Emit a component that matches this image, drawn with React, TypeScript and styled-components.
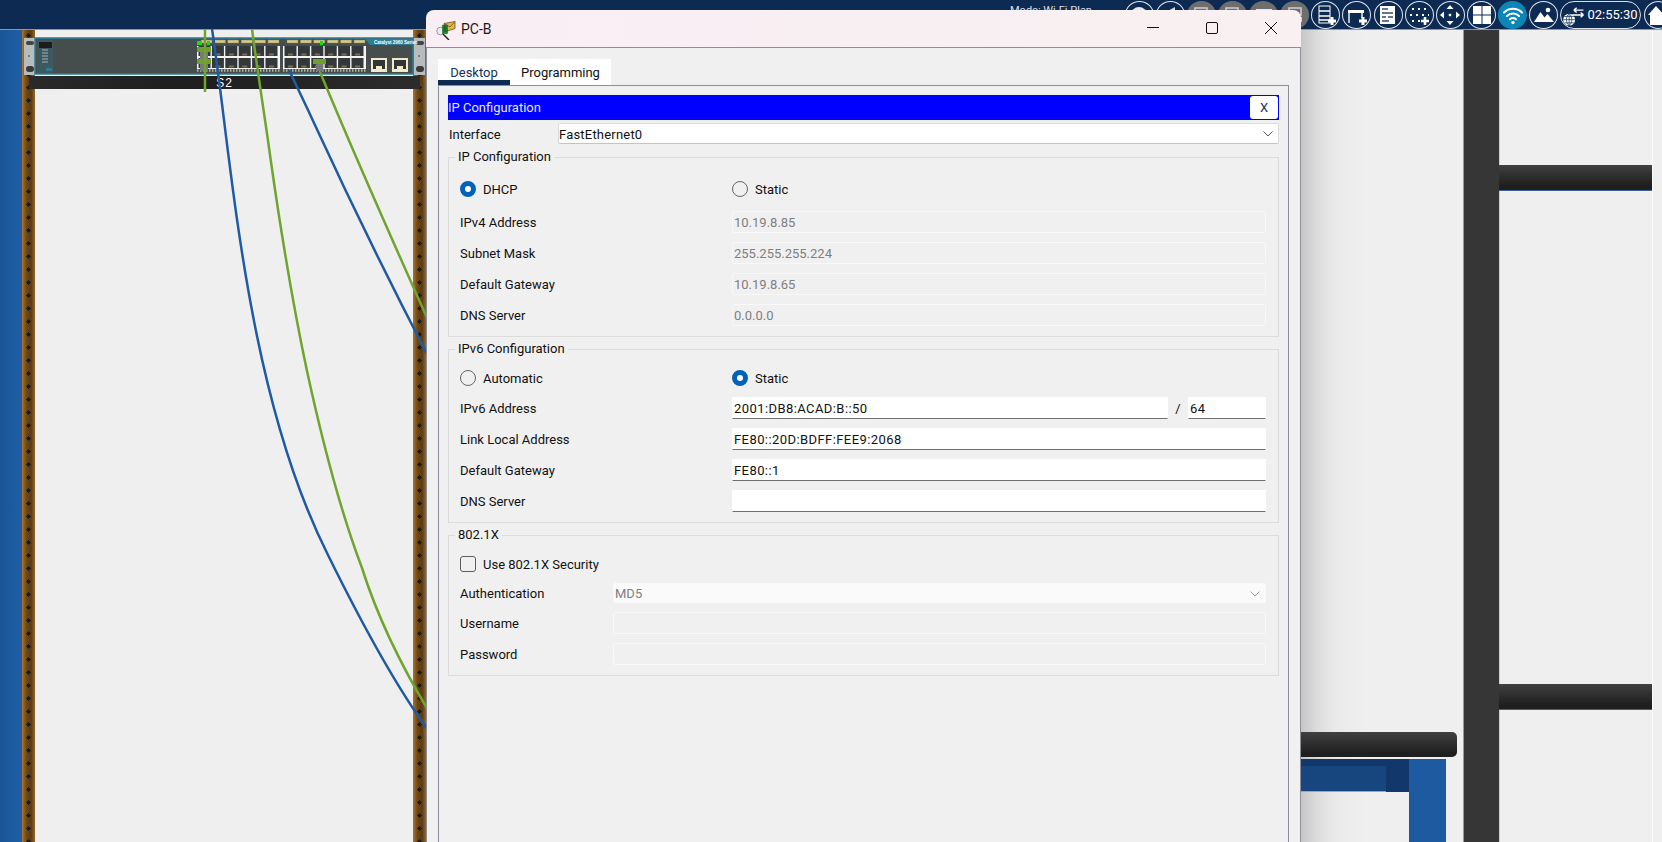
import React from 'react';
import styled, { createGlobalStyle } from 'styled-components';

const GlobalStyle = createGlobalStyle`
  html, body { margin: 0; padding: 0; background: #efefef; }
  #root { width: 1662px; height: 842px; }
  * { box-sizing: border-box; }
`;

const UI_FONT = `Roboto, "Open Sans", Arial, sans-serif`;

const Root = styled.div`
  position: relative;
  width: 1662px;
  height: 842px;
  overflow: hidden;
  display: flex;
  flex-direction: column;
  font-family: ${UI_FONT};
  font-size: 13px;
  color: #111;
`;

/* ---------- top toolbar ---------- */
const TopBar = styled.header`
  flex: 0 0 30px;
  display: flex;
  align-items: center;
  padding-left: 1010px;
  background: #0d2a52;
  border-bottom: 1px solid #8d96a6;
`;
const ModeText = styled.span`
  flex: 0 0 114.5px;
  font-size: 11px;
  line-height: 1;
  margin-top: -8px;
  color: #d9e0ea;
  white-space: nowrap;
`;
const ToolRow = styled.div`
  display: flex;
  align-items: center;
  gap: 2.15px;
  flex-shrink: 0;
`;
const ToolButton = styled.div<{ $variant?: 'outline' | 'muted' | 'active' }>`
  width: 29px;
  height: 28px;
  flex-shrink: 0;
  border-radius: 50%;
  display: flex;
  align-items: center;
  justify-content: center;
  border: 1px solid ${p => (p.$variant === 'muted' ? '#6e6e6e' : p.$variant === 'active' ? '#0b86b6' : '#dfe4ec')};
  background: ${p => (p.$variant === 'muted' ? '#6e6e6e' : p.$variant === 'active' ? '#0b86b6' : 'transparent')};
`;
const ClockPill = styled.div`
  width: 81px;
  height: 28px;
  flex-shrink: 0;
  border-radius: 14px;
  border: 1px solid #dfe4ec;
  display: flex;
  align-items: center;
  padding-left: 1px;
  gap: 2px;
  color: #fff;
  font-size: 13px;
`;

const W = '#fff';
const Ico = ({ children }: { children: React.ReactNode }) => (
  <svg width="22" height="22" viewBox="0 0 22 22" fill="none">{children}</svg>
);
const ListPlus = () => (
  <Ico>
    <rect x="4" y="2" width="11" height="17" fill="none" stroke={W} strokeWidth="1" />
    <path d="M4 7h11M4 12h11M4 16h11" stroke={W} strokeWidth="1.4" />
    <path d="M17 13v8M13 17h8" stroke={W} strokeWidth="3" />
  </Ico>
);
const TablePlus = () => (
  <Ico>
    <path d="M2 6h16v3H2z" fill={W} />
    <path d="M3 9v10M16 9v5" stroke={W} strokeWidth="1.4" />
    <path d="M17 13v8M13 17h8" stroke={W} strokeWidth="3" />
  </Ico>
);
const PanelIcon = () => (
  <Ico>
    <rect x="3" y="2" width="15" height="18" fill={W} />
    <path d="M5 5h6M5 9h11M5 13h4M11 13h5M5 17h7" stroke="#33496b" strokeWidth="1.5" />
  </Ico>
);
const DotsPlus = () => (
  <Ico>
    <path d="M4 5h2M10 5h2M16 5h2M2 11h2M8 11h2M14 11h2M20 11h1M4 17h2M10 17h2" stroke={W} strokeWidth="2" />
    <path d="M17 13v8M13 17h8" stroke={W} strokeWidth="2.6" />
  </Ico>
);
const MoveIcon = () => (
  <Ico>
    <path d="M11 1l3.5 4h-7zM11 21l3.5-4h-7zM1 11l4-3.500v7zM21 11l-4-3.500v7z" fill={W} />
    <rect x="9.800" y="9.800" width="2.400" height="2.400" fill={W} />
  </Ico>
);
const GridIcon = () => (
  <Ico>
    <path d="M2 2h8.500v8.500H2zM11.500 2H20v8.500h-8.500zM2 11.500h8.500V20H2zM11.500 11.500H20V20h-8.500z" fill={W} />
  </Ico>
);
const WifiIcon = () => (
  <Ico>
    <path d="M2 8.500c5-5 13-5 18 0M5 12c3.300-3.300 8.700-3.300 12 0M8 15.300c1.700-1.600 4.300-1.600 6 0" stroke={W} strokeWidth="2" strokeLinecap="round" />
    <circle cx="11" cy="18.500" r="1.700" fill={W} />
  </Ico>
);
const MountainIcon = () => (
  <Ico>
    <path d="M1 18l6.500-10 4 5.500 3-3.500 6.500 8z" fill={W} />
    <circle cx="15" cy="6" r="2.300" fill={W} />
  </Ico>
);
const HomeIcon = () => (
  <Ico>
    <path d="M1 11L9 2l8 9h-2v10H3V11z" fill={W} />
  </Ico>
);
const CircleGlyph = () => (
  <Ico>
    <circle cx="11" cy="11" r="8" fill="#e9e9e9" />
  </Ico>
);
const BackGlyph = () => (
  <Ico>
    <path d="M3 10l13-7v14z" fill="#d9d9d9" />
  </Ico>
);
const MutedPc = () => (
  <Ico>
    <rect x="5" y="4" width="12" height="7" fill="none" stroke="#cfcfcf" strokeWidth="1.500" />
    <rect x="4" y="13" width="14" height="5" fill="#cfcfcf" />
  </Ico>
);
const MutedBar = () => (
  <Ico>
    <rect x="3" y="5" width="16" height="12" fill="#e6e6e6" />
    <rect x="5" y="7" width="9" height="2" fill="#6e6e6e" />
  </Ico>
);
const GlobeArrows = () => (
  <svg width="23" height="21" viewBox="0 0 29 26" fill="none" style={{ flexShrink: 0, marginTop: 3 }}>
    <circle cx="9" cy="17" r="7.500" fill={W} />
    <path d="M1.500 17h15M9 9.500v15M3 13h12M3 21h12M9 9.500c-4.500 3-4.500 12 0 15M9 9.500c4.500 3 4.500 12 0 15" stroke="#0d2a52" strokeWidth="0.900" />
    <path d="M15 5h12M15 5l3.500-3M15 5l3.500 3M13 11h14M27 11l-3.500-3M27 11l-3.500 3" stroke={W} strokeWidth="1.800" />
  </svg>
);

/* ---------- free canvas: what lies behind the window ---------- */
const Canvas = styled.main`
  position: relative;
  flex: 1;
  background: #efefef;
`;
const BlueEdge = styled.div`
  position: absolute;
  left: 0;
  top: 0;
  bottom: 0;
  width: 22px;
  background: linear-gradient(90deg, #1b5595, #1e5ea8);
`;
const Rail = styled.div<{ $x: number }>`
  position: absolute;
  left: ${p => p.$x}px;
  top: 0;
  bottom: 0;
  width: 13px;
  background:
    radial-gradient(circle 2.2px at 50% 50%, #1c1c1c 90%, transparent 100%) 0 -1px / 13px 13px repeat-y,
    linear-gradient(90deg, #a8742a, #6c4718 35%, #5b3b12 70%, #96692a);
`;
const LabelBar = styled.div`
  position: absolute;
  left: 29px;
  top: 46px;
  width: 391px;
  height: 13px;
  display: flex;
  align-items: center;
  justify-content: center;
  background: linear-gradient(100deg, #2a2a2a, #1e1e1e 40%, #2c2c2c);
  color: #fff;
  font-family: "Liberation Sans", Arial, sans-serif;
  font-size: 12px;
  letter-spacing: 1px;
`;
const RackArt = styled.svg`
  position: absolute;
  left: 0;
  top: -30px;
`;
const CableArt = styled.svg`
  position: absolute;
  left: 0;
  top: -30px;
`;
const WindowShadow = styled.div`
  position: absolute;
  left: 1301px;
  top: 0;
  bottom: 0;
  width: 64px;
  background: linear-gradient(90deg, #c6c6c6, #dcdcdc 25%, #eaeaea 55%, #efefef);
`;
const Post = styled.div`
  position: absolute;
  left: 1463px;
  top: 0;
  bottom: 0;
  width: 37px;
  background: #363636;
  border-left: 1px solid #9a9a9a;
  border-right: 1px solid #cfcfcf;
`;
const Beam = styled.div<{ $y: number }>`
  position: absolute;
  left: 1499px;
  top: ${p => p.$y}px;
  width: 153px;
  height: 26px;
  background: linear-gradient(180deg, #404040, #1e1e1e 85%);
  border-bottom: 1px solid #3c5f8f;
`;
const RightEdge = styled.div`
  position: absolute;
  left: 1652px;
  top: 0;
  bottom: 0;
  width: 1px;
  background: #fbfbfb;
`;
const TableTop = styled.div`
  position: absolute;
  left: 1301px;
  top: 702px;
  width: 156px;
  height: 25px;
  border-radius: 0 5px 5px 0;
  background: linear-gradient(180deg, #404040, #1f1f1f 85%);
`;
const TableApron = styled.div`
  position: absolute;
  left: 1301px;
  top: 729px;
  width: 108px;
  height: 33px;
  background: linear-gradient(180deg, #12386b 7px, #17467f 7px);
  border-bottom: 1px solid #9aa6b8;
`;
const TableApronDark = styled.div`
  position: absolute;
  left: 1386px;
  top: 729px;
  width: 23px;
  height: 33px;
  background: #12386b;
`;
const TableLeg = styled.div`
  position: absolute;
  left: 1409px;
  top: 729px;
  bottom: 0;
  width: 37px;
  background: #1d5aa0;
`;

/* ---------- the switch and the cables ---------- */
const Port = ({ x, y }: { x: number; y: number }) => (
  <g>
    <rect x={x + 0.5} y={y} width="12" height="10" fill="#33383a" />
    <rect x={x + 4} y={y + 7.500} width="5" height="2" fill="#7d6f52" />
  </g>
);
const PORT_COLUMNS = [0, 1, 2, 3, 4, 5];
const PortBlock = ({ x }: { x: number }) => (
  <g>
    <rect x={x} y={46} width={83} height={23} fill="#f4f4f4" />
    {PORT_COLUMNS.map(c => (
      <g key={c}>
        <Port x={x + 1 + c * 13.4} y={46} />
        <Port x={x + 1 + c * 13.4} y={58} />
        <rect x={x + 4 + c * 13.4} y={40} width={11} height={3} fill="#d8c98c" stroke="#8c8452" strokeWidth="0.500" />
      </g>
    ))}
    <path d={`M${x} 70.500h83`} stroke="#b8b39a" strokeWidth="2.500" strokeDasharray="1.500 1.500" />
  </g>
);
const Uplink = ({ x }: { x: number }) => (
  <g>
    <rect x={x} y={58} width={16} height={14} fill="#f1e9c8" />
    <rect x={x + 2} y={60} width={12} height={9} fill="#2f3436" />
    <rect x={x + 5} y={66} width={6} height={3} fill="#f1e9c8" />
  </g>
);
const Plug = ({ x, y, w }: { x: number; y: number; w: number }) => (
  <g>
    <rect x={x} y={y} width={w} height={5} fill="#6f9f2e" />
    <rect x={x + 3} y={y + 5} width={w - 6} height={7} fill="#77797a" />
  </g>
);
const Ear = ({ x }: { x: number }) => (
  <g>
    <rect x={x} y={38} width={11} height={37} fill="#b9bcbc" />
    <rect x={x + 2} y={41} width={8} height={4} rx="2" fill="#444" />
    <rect x={x + 2} y={66} width={8} height={6} rx="3" fill="#3a3a3a" />
    <circle cx={x + 5} cy={56} r="1" fill="#666" />
  </g>
);
const RackDrawing = () => (
  <RackArt width="430" height="100" viewBox="0 0 430 100">
    <Ear x={24} />
    <Ear x={414} />
    <rect x="35" y="38" width="378" height="36" fill="#454d4d" stroke="#2b7d96" strokeWidth="1.500" />
    <path d="M365 39h47v6h-42z" fill="#2b7d96" />
    <rect x="37" y="40" width="16" height="33" fill="#3d585f" />
    <rect x="39" y="42" width="13" height="6" fill="#1c1c1c" />
    <path d="M42 50h6M42 53h6M42 56h6M42 59h6M42 62h6" stroke="#a9b4b4" strokeWidth="1" />
    <rect x="46" y="68" width="6" height="3" fill="#2b7d96" />
    <PortBlock x={197} />
    <PortBlock x={283} />
    <Uplink x={371} />
    <Uplink x={392} />
    <text x="374" y="44" fontSize="4.500" fontWeight="bold" fill="#fff" fontFamily="Liberation Sans, Arial, sans-serif">Catalyst 2960 Series</text>
    <rect x="197" y="41" width="5" height="4" fill="#12e012" />
    <rect x="207" y="41" width="3" height="4" fill="#12e012" />
    <rect x="320" y="41" width="3" height="4" fill="#12e012" />
    <Plug x={197} y={47} w={14} />
    <Plug x={197} y={59} w={14} />
    <Plug x={313} y={59} w={13} />
  </RackArt>
);
const Cables = () => (
  <CableArt width="430" height="812" viewBox="0 0 430 812" fill="none">
    <path d="M205 29V92" stroke="#6fa52f" strokeWidth="2.500" />
    <path d="M212 29C232 160 245 390 328 555C360 620 395 685 428 730" stroke="#1f5aa5" strokeWidth="2.500" />
    <path d="M252 29C258 75 266 125 270 155C282 240 294 310 307 371C322 440 340 510 362 568C380 625 404 670 428 710" stroke="#6fa52f" strokeWidth="2.500" />
    <path d="M289 70L308 110C322 140 360 225 428 356" stroke="#1f5aa5" strokeWidth="2.500" />
    <path d="M320 72L336 110C355 155 390 235 428 320" stroke="#6fa52f" strokeWidth="2.500" />
  </CableArt>
);

/* ---------- dialog window ---------- */
const Window = styled.section`
  position: absolute;
  left: 426px;
  top: 10px;
  width: 875px;
  height: 832px;
  display: flex;
  flex-direction: column;
  border-radius: 8px 8px 0 0;
  overflow: hidden;
`;
const TitleBar = styled.div`
  flex: 0 0 38px;
  display: flex;
  align-items: center;
  padding-left: 10px;
  background: linear-gradient(90deg, #f9eef4, #f8f0f1);
  border-bottom: 1px solid #8a8f9a;
`;
const TitleText = styled.span`
  margin-left: 5px;
  font-size: 14px;
  color: #1a1a1a;
  flex: 1;
`;
const WinControl = styled.span`
  width: 12px;
  height: 12px;
  display: flex;
  flex-shrink: 0;
`;
const WinControls = styled.div`
  display: flex;
  gap: 47px;
  padding-right: 24px;
  margin-top: -1px;
`;
const WindowBody = styled.div`
  flex: 1;
  display: flex;
  flex-direction: column;
  align-items: flex-start;
  padding: 11px 11px 0 11px;
  background: #f0f0f0;
  border-left: 1px solid #8a8f9a;
  border-right: 1px solid #8a8f9a;
`;
const TabStrip = styled.div`
  display: flex;
  height: 26px;
  background: #fff;
`;
const Tab = styled.div<{ $active?: boolean }>`
  width: ${p => (p.$active ? 72 : 101)}px;
  display: flex;
  align-items: center;
  justify-content: center;
  padding-top: 5px;
  padding-bottom: ${p => (p.$active ? 0 : 5)}px;
  border-bottom: ${p => (p.$active ? '5px solid #0d2a52' : 'none')};
  color: ${p => (p.$active ? '#16305a' : '#111')};
`;
const TabPanel = styled.div`
  align-self: stretch;
  flex: 1;
  padding: 9px 9px 0 9px;
  border: 1px solid #8a8f9a;
  border-bottom: none;
`;
const Banner = styled.div`
  height: 25px;
  display: flex;
  align-items: center;
  justify-content: space-between;
  padding-right: 1px;
  background: #0000ff;
  color: #e4e8ff;
`;
const CloseButton = styled.div`
  width: 28px;
  height: 23px;
  display: flex;
  align-items: center;
  justify-content: center;
  border-radius: 3px;
  background: #fff;
  color: #1d3160;
`;
const InterfaceRow = styled.div`
  display: grid;
  grid-template-columns: 109px 721px;
  align-items: center;
  height: 21px;
  margin-top: 3px;
  padding-left: 1px;
`;
const InterfaceLabel = styled.span`
  padding-top: 1px;
`;
const SelectBox = styled.div<{ $disabled?: boolean }>`
  height: ${p => (p.$disabled ? 20 : 21)}px;
  display: flex;
  align-items: center;
  justify-content: space-between;
  padding: 1px 5px 0 ${p => (p.$disabled ? 1 : 0)}px;
  border-radius: 2px;
  letter-spacing: ${p => (p.$disabled ? 0 : 0.2)}px;
  background: ${p => (p.$disabled ? '#fafafa' : '#fff')};
  color: ${p => (p.$disabled ? '#7f7f7f' : '#111')};
  border: 1px solid ${p => (p.$disabled ? '#fafafa' : '#dcdcdc')};
  border-bottom-color: ${p => (p.$disabled ? '#fafafa' : '#c4c4c4')};
`;
const Group = styled.fieldset`
  margin: 4px 0 0;
  padding: 0 12px 10px 11px;
  width: 831px;
  border: 1px solid #dcdcdc;
  &:first-of-type { margin-top: 5px; }
`;
const GroupTitle = styled.legend`
  margin-left: -5px;
  padding: 0 3px;
  line-height: 16px;
  height: 16px;
`;
const Row = styled.div<{ $labelWidth?: number; $gap?: number }>`
  display: grid;
  grid-template-columns: ${p => p.$labelWidth ?? 272}px 1fr;
  align-items: center;
  height: 22px;
  margin-top: ${p => p.$gap ?? 9}px;
`;
const ChoiceRow = styled.div<{ $top: number }>`
  display: grid;
  grid-template-columns: 272px 1fr;
  align-items: center;
  height: 22px;
  margin-top: ${p => p.$top}px;
`;
const Choice = styled.div`
  display: flex;
  align-items: center;
  gap: 7px;
`;
const RadioDot = styled.span<{ $on?: boolean }>`
  width: 16px;
  height: 16px;
  flex-shrink: 0;
  border-radius: 50%;
  background: ${p => (p.$on ? '#fff' : 'transparent')};
  border: ${p => (p.$on ? '5px solid #0063b8' : '1px solid #666')};
`;
const CheckMark = styled.span`
  width: 16px;
  height: 16px;
  flex-shrink: 0;
  border-radius: 3px;
  border: 1px solid #5c5c5c;
`;
const Field = styled.div<{ $live?: boolean }>`
  height: 22px;
  display: flex;
  align-items: center;
  padding: 0 1px;
  border-radius: ${p => (p.$live ? 0 : 2)}px;
  white-space: nowrap;
  letter-spacing: ${p => (p.$live ? 0.42 : 0)}px;
  color: ${p => (p.$live ? '#111' : '#7f7f7f')};
  background: ${p => (p.$live ? '#fff' : 'transparent')};
  border: 1px solid ${p => (p.$live ? '#fff' : '#f8f8f8')};
  border-bottom-color: ${p => (p.$live ? '#6f6f6f' : '#f8f8f8')};
`;
const PrefixFields = styled.div`
  display: grid;
  grid-template-columns: 436px 20px 78px;
  align-items: center;
`;
const Slash = styled.span`
  text-align: center;
`;

const Chevron = ({ color }: { color: string }) => (
  <svg width="10" height="6" viewBox="0 0 10 6" fill="none">
    <path d="M.5.5L5 5 9.500.5" stroke={color} strokeWidth="1" />
  </svg>
);

const AppIcon = () => (
  <svg width="20" height="20" viewBox="0 0 20 20" fill="none" style={{ marginTop: 2 }}>
    <circle cx="4.500" cy="11" r="3.800" fill="#ececec" stroke="#9a9a9a" strokeWidth="1" />
    <path d="M7 14l6 6" stroke="#222" strokeWidth="1.500" />
    <path d="M8 3.500l11-2 0 7-9 3z" fill="#e3b64a" stroke="#6b5320" strokeWidth="0.800" />
    <path d="M8 3.500l6 3.500 5-5.500" stroke="#6b5320" strokeWidth="0.800" />
    <path d="M6.500 5h5v8.500h-5z" fill="#1b8a2c" stroke="#0e4f1a" strokeWidth="0.500" />
    <path d="M7.500 7h3M7.500 9h3M7.500 11h3" stroke="#0a3a12" strokeWidth="0.700" />
  </svg>
);

const IPV4_ROWS = [
  ['Subnet Mask', '255.255.255.224'],
  ['Default Gateway', '10.19.8.65'],
  ['DNS Server', '0.0.0.0'],
];
const IPV6_ROWS = [
  ['Link Local Address', 'FE80::20D:BDFF:FEE9:2068'],
  ['Default Gateway', 'FE80::1'],
  ['DNS Server', ''],
];

export default function App() {
  return (
    <Root>
      <GlobalStyle />
      <TopBar>
        <ModeText>Mode: Wi-Fi Plan</ModeText>
        <ToolRow>
          <ToolButton><CircleGlyph /></ToolButton>
          <ToolButton><BackGlyph /></ToolButton>
          <ToolButton $variant="muted"><MutedPc /></ToolButton>
          <ToolButton $variant="muted"><MutedPc /></ToolButton>
          <ToolButton $variant="muted"><MutedBar /></ToolButton>
          <ToolButton $variant="muted"><MutedPc /></ToolButton>
          <ToolButton><ListPlus /></ToolButton>
          <ToolButton><TablePlus /></ToolButton>
          <ToolButton><PanelIcon /></ToolButton>
          <ToolButton><DotsPlus /></ToolButton>
          <ToolButton><MoveIcon /></ToolButton>
          <ToolButton><GridIcon /></ToolButton>
          <ToolButton $variant="active"><WifiIcon /></ToolButton>
          <ToolButton><MountainIcon /></ToolButton>
          <ClockPill><GlobeArrows />02:55:30</ClockPill>
          <ToolButton><HomeIcon /></ToolButton>
        </ToolRow>
      </TopBar>

      <Canvas>
        <BlueEdge />
        <Rail $x={22} />
        <Rail $x={413} />
        <RackDrawing />
        <LabelBar>S2</LabelBar>
        <Cables />
        <WindowShadow />
        <Post />
        <Beam $y={135} />
        <Beam $y={654} />
        <RightEdge />
        <TableApron />
        <TableApronDark />
        <TableLeg />
        <TableTop />
      </Canvas>

      <Window>
        <TitleBar>
          <AppIcon />
          <TitleText>PC-B</TitleText>
          <WinControls>
            <WinControl>
              <svg width="12" height="12" viewBox="0 0 12 12" fill="none"><path d="M0 5.500h12" stroke="#111" /></svg>
            </WinControl>
            <WinControl>
              <svg width="12" height="12" viewBox="0 0 12 12" fill="none"><rect x=".5" y=".5" width="11" height="11" rx="1.500" stroke="#111" /></svg>
            </WinControl>
            <WinControl>
              <svg width="12" height="12" viewBox="0 0 12 12" fill="none"><path d="M0 0l12 12M12 0L0 12" stroke="#111" /></svg>
            </WinControl>
          </WinControls>
        </TitleBar>
        <WindowBody>
          <TabStrip>
            <Tab $active>Desktop</Tab>
            <Tab>Programming</Tab>
          </TabStrip>
          <TabPanel>
            <Banner>
              IP Configuration
              <CloseButton>X</CloseButton>
            </Banner>
            <InterfaceRow>
              <InterfaceLabel>Interface</InterfaceLabel>
              <SelectBox>FastEthernet0<Chevron color="#555" /></SelectBox>
            </InterfaceRow>

            <Group>
              <GroupTitle>IP Configuration</GroupTitle>
              <ChoiceRow $top={13}>
                <Choice><RadioDot $on />DHCP</Choice>
                <Choice><RadioDot />Static</Choice>
              </ChoiceRow>
              <Row $gap={11}>
                <span>IPv4 Address</span>
                <Field>10.19.8.85</Field>
              </Row>
              {IPV4_ROWS.map(([label, value]) => (
                <Row key={label}>
                  <span>{label}</span>
                  <Field>{value}</Field>
                </Row>
              ))}
            </Group>

            <Group>
              <GroupTitle>IPv6 Configuration</GroupTitle>
              <ChoiceRow $top={10}>
                <Choice><RadioDot />Automatic</Choice>
                <Choice><RadioDot $on />Static</Choice>
              </ChoiceRow>
              <Row $gap={8}>
                <span>IPv6 Address</span>
                <PrefixFields>
                  <Field $live>2001:DB8:ACAD:B::50</Field>
                  <Slash>/</Slash>
                  <Field $live>64</Field>
                </PrefixFields>
              </Row>
              {IPV6_ROWS.map(([label, value]) => (
                <Row key={label}>
                  <span>{label}</span>
                  <Field $live>{value}</Field>
                </Row>
              ))}
            </Group>

            <Group>
              <GroupTitle>802.1X</GroupTitle>
              <ChoiceRow $top={10}>
                <Choice><CheckMark />Use 802.1X Security</Choice>
              </ChoiceRow>
              <Row $labelWidth={153} $gap={7}>
                <span>Authentication</span>
                <SelectBox $disabled>MD5<Chevron color="#a0a0a0" /></SelectBox>
              </Row>
              <Row $labelWidth={153} $gap={8}>
                <span>Username</span>
                <Field />
              </Row>
              <Row $labelWidth={153}>
                <span>Password</span>
                <Field />
              </Row>
            </Group>
          </TabPanel>
        </WindowBody>
      </Window>
    </Root>
  );
}
